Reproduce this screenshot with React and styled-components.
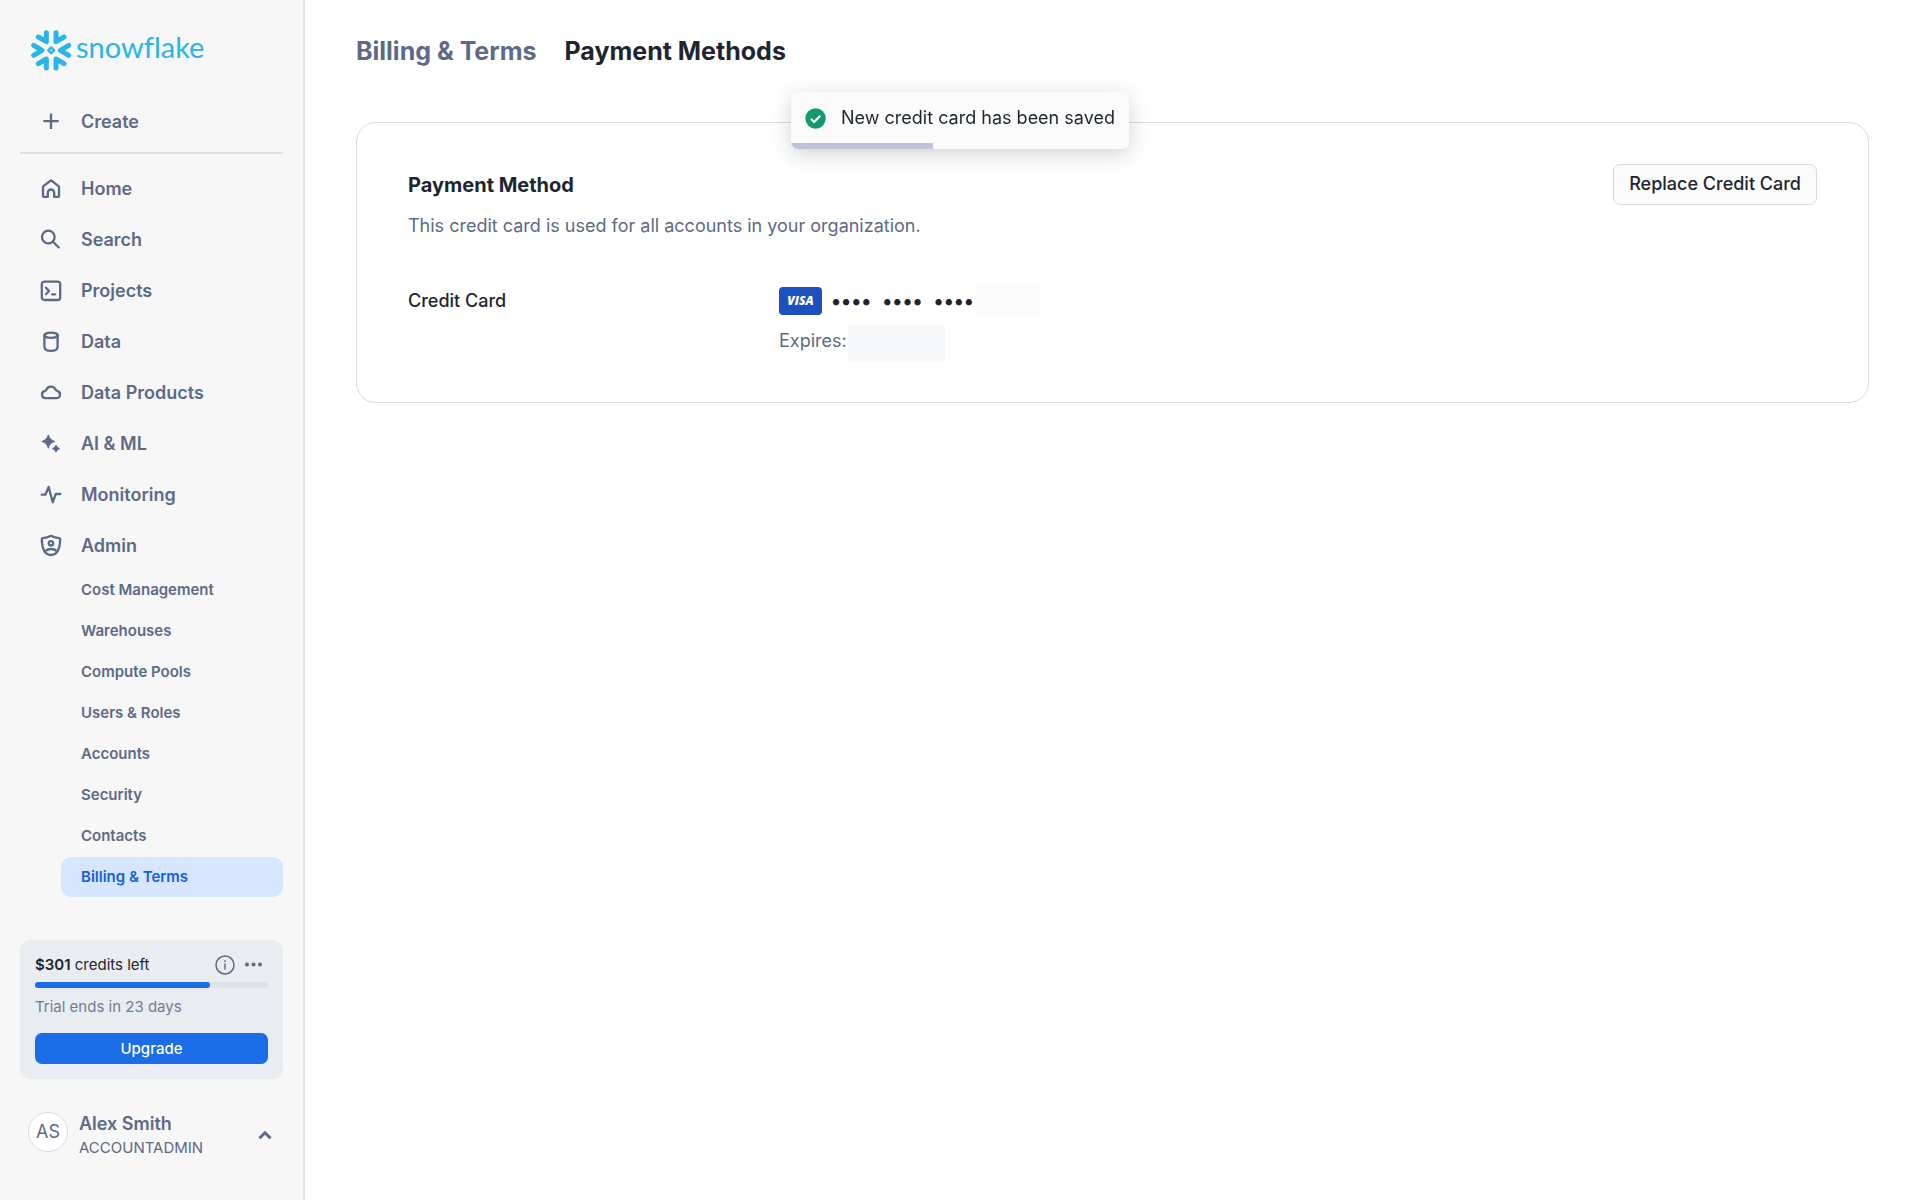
import React from "react";
import styled, { createGlobalStyle } from "styled-components";

const GlobalStyle = createGlobalStyle`
	*, *::before, *::after {
		box-sizing: border-box;
	}
	body {
		margin: 0;
		background: #ffffff;
		color: #1e252f;
		font-family: Inter, "Liberation Sans", sans-serif;
		font-size: 18px;
		line-height: 24px;
	}
	a {
		color: inherit;
		text-decoration: none;
	}
	button {
		font: inherit;
		cursor: pointer;
	}
	h1, h2, p, ul, dl, dd {
		margin: 0;
		padding: 0;
	}
`;

const Layout = styled.div`
	display: flex;
	min-height: 100vh;
`;

const Sidebar = styled.aside`
	display: flex;
	flex-direction: column;
	flex: none;
	width: 305px;
	padding: 30px 20px 40px;
	background: #f7f7f7;
	border-right: 2px solid #dfe1e6;
	color: #5d6a85;
`;

const Logo = styled.a`
	display: flex;
	align-items: center;
	gap: 4px;
	height: 41px;
	margin-left: 11px;
	color: #29b5e8;
`;

const Wordmark = styled.span`
	font-family: Lato, sans-serif;
	font-size: 29px;
	line-height: 36px;
	font-variant-ligatures: none;
	padding-bottom: 7px;
`;

const NavItem = styled.a`
	display: flex;
	align-items: center;
	gap: 18px;
	height: 51px;
	padding: 0 19px;
	font-weight: 600;
`;

const CreateButton = styled.button`
	display: flex;
	align-items: center;
	gap: 18px;
	height: 51px;
	margin-top: 25px;
	padding: 0 19px;
	border: 0;
	background: none;
	color: inherit;
	font-weight: 600;
`;

const Divider = styled.hr`
	width: 100%;
	height: 2px;
	margin: 5px 0 9px;
	border: 0;
	background: #dfe1e6;
`;

const NavList = styled.ul`
	list-style: none;
`;

const SubNavList = styled(NavList)`
	margin-top: -1px;
`;

const SubItem = styled.a`
	display: flex;
	align-items: center;
	height: 40px;
	margin: 0 0 1px 41px;
	padding: 0 20px;
	border-radius: 10px;
	font-size: 15px;
	font-weight: 600;
	background: ${({ $active }) => ($active ? "#d6e6ff" : "transparent")};
	color: ${({ $active }) => ($active ? "#1361d9" : "inherit")};
`;

const TrialCard = styled.section`
	margin-top: auto;
	padding: 14px 15px 15px;
	border-radius: 10px;
	background: #e9edf1;
	font-size: 15px;
`;

const TrialHeader = styled.div`
	display: flex;
	align-items: center;
	gap: 8px;
	height: 21px;
`;

const Credits = styled.p`
	flex: 1;
	color: #1e252f;
	strong {
		font-weight: 600;
	}
`;

const IconButton = styled.button`
	display: flex;
	padding: 0;
	border: 0;
	background: none;
	color: #5d6a85;
`;

const Track = styled.div`
	height: 6px;
	margin: 7px 0;
	border-radius: 3px;
	background: #dee1e5;
`;

const TrackFill = styled.div`
	height: 100%;
	border-radius: 3px;
	background: #1a6ce7;
`;

const TrialNote = styled.p`
	color: #717c94;
`;

const UpgradeButton = styled.button`
	width: 100%;
	height: 31px;
	margin-top: 14px;
	padding: 0;
	border: 0;
	border-radius: 7px;
	background: #1a6ce7;
	color: #ffffff;
	font-size: 15px;
	font-weight: 500;
`;

const UserMenu = styled.button`
	display: flex;
	align-items: center;
	gap: 11px;
	margin-top: 33px;
	padding: 0 10px 0 8px;
	border: 0;
	background: none;
	color: inherit;
	text-align: left;
`;

const Avatar = styled.span`
	display: flex;
	align-items: center;
	justify-content: center;
	align-self: flex-start;
	width: 40px;
	height: 40px;
	border: 1px solid #d5dae4;
	border-radius: 50%;
	background: #ffffff;
`;

const UserInfo = styled.span`
	display: flex;
	flex: 1;
	flex-direction: column;
`;

const UserName = styled.span`
	font-weight: 600;
`;

const UserRole = styled.span`
	font-size: 15px;
`;

const Main = styled.main`
	flex: 1;
	min-width: 0;
	padding: 34px 51px;
`;

const Tabs = styled.nav`
	display: flex;
	gap: 28px;
`;

const Tab = styled.a`
	font-size: 25px;
	line-height: 34px;
	font-weight: 700;
	color: ${({ $active }) => ($active ? "#1e252f" : "#5d6a85")};
`;

const Card = styled.section`
	margin-top: 54px;
	padding: 41px 51px 40px;
	border: 1px solid #d5dae4;
	border-radius: 20px;
`;

const CardHeader = styled.div`
	display: flex;
	align-items: center;
	justify-content: space-between;
`;

const CardTitle = styled.h2`
	font-size: 20px;
	font-weight: 700;
`;

const ReplaceButton = styled.button`
	height: 41px;
	padding: 0 15px 2px;
	border: 1px solid #d5dae4;
	border-radius: 7px;
	background: #fbfbfb;
	color: #1e252f;
	font-weight: 500;
`;

const CardDescription = styled.p`
	margin-top: 9px;
	color: #5d6a85;
`;

const Details = styled.dl`
	display: grid;
	grid-template-columns: 371px 1fr;
	margin-top: 46px;
`;

const DetailLabel = styled.dt`
	padding-top: 5px;
	font-weight: 500;
`;

const CardNumber = styled.div`
	display: flex;
	align-items: center;
	height: 33px;
`;

const VisaBadge = styled.span`
	display: flex;
	align-items: center;
	justify-content: center;
	width: 43px;
	height: 28px;
	margin-right: 9px;
	border-radius: 4px;
	background: #1f4fbf;
	color: #ffffff;
	font-family: "Open Sans", sans-serif;
	font-size: 12px;
	font-style: italic;
	font-weight: 800;
`;

const Dots = styled.span`
	display: flex;
	gap: 11px;
	margin-right: 2px;
	font-size: 20px;
	font-weight: 600;
`;

const Expiry = styled.div`
	display: flex;
	gap: 1px;
	margin-top: 8px;
	line-height: 32px;
	color: #5d6a85;
`;

const Masked = styled.span`
	width: ${({ $width }) => $width}px;
	height: ${({ $height }) => $height}px;
	background: ${({ $color }) => $color};
`;

const Toast = styled.div`
	position: fixed;
	top: 92px;
	left: 50%;
	transform: translateX(-50%);
	display: flex;
	align-items: center;
	gap: 15px;
	height: 57px;
	padding: 0 14px 5px;
	overflow: hidden;
	border-radius: 7px;
	background: #fbfbfb;
	box-shadow: 0 5px 20px rgba(25, 30, 36, 0.2);
	white-space: nowrap;
`;

const ToastProgress = styled.div`
	position: absolute;
	left: 0;
	bottom: 0;
	height: 6px;
	background: #bdc4d5;
`;

const Icon = ({ children, size = 24 }) => (
	<svg
		width={size}
		height={size}
		viewBox="0 0 24 24"
		fill="none"
		stroke="currentColor"
		strokeWidth="2.300"
		strokeLinecap="round"
		strokeLinejoin="round"
		aria-hidden="true"
	>
		{children}
	</svg>
);

const SnowflakeMark = () => (
	<svg width="41" height="41" viewBox="0 0 123 123" fill="none" stroke="currentColor" strokeWidth="15" strokeLinecap="round" strokeLinejoin="round" aria-hidden="true">
		<path d="M8 46 33 61 8 76M113 46 88 61 113 76" />
		<path d="M46 8V35L22 21M75 8V35L99 21M46 114V87L22 101M75 114V87L99 101" />
		<path strokeWidth="7.500" d="M60.500 52.500 69 61 60.500 69.500 52 61Z" />
	</svg>
);

const NAV = [
	{
		label: "Home",
		icon: <path d="M4 10.200a1.800 1.800 0 0 1 .7-1.400L12 3.300l7.300 5.500a1.800 1.800 0 0 1 .7 1.400V18.900a1 1 0 0 1-1 1h-3.800v-4.200a3.200 3.200 0 0 0-6.400 0v4.200H5a1 1 0 0 1-1-1z" />,
	},
	{
		label: "Search",
		icon: (
			<>
				<circle cx="9.300" cy="9" r="6.300" />
				<path d="m14 13.700 5.800 5.800" />
			</>
		),
	},
	{
		label: "Projects",
		icon: (
			<>
				<rect x="2.800" y="2.600" width="18.400" height="18.400" rx="2.500" />
				<path d="m7 8.800 3 3.200-3 3.200M13 15.300h3.200" />
			</>
		),
	},
	{
		label: "Data",
		icon: (
			<>
				<ellipse cx="12" cy="5.200" rx="6.600" ry="2.600" />
				<path d="M5.400 5.200v11.500c0 2.600 2.400 4.200 6.600 4.200s6.600-1.600 6.600-4.200V5.200" />
			</>
		),
	},
	{
		label: "Data Products",
		icon: <path d="M6.500 17.200h11.200a3.700 3.700 0 0 0 .4-7.300c-.8-.2-1.200-.7-1.500-1.400a5.100 5.100 0 0 0-9.300.2c-.3.600-.7 1-1.400 1.200a3.700 3.700 0 0 0 .6 7.300z" />,
	},
	{
		label: "AI & ML",
		icon: (
			<g fill="currentColor" strokeWidth="1.200">
				<path d="M9.300 3.200q1 5.200 6.200 6.300-5.200 1.100-6.200 6.300-1-5.200-6.200-6.300 5.200-1.100 6.200-6.300z" />
				<path d="M17 13.500q.6 2.600 3.200 3.200-2.600.6-3.200 3.200-.6-2.600-3.200-3.200 2.600-.6 3.200-3.200z" />
			</g>
		),
	},
	{
		label: "Monitoring",
		icon: <path d="M2.700 11.700H6.300L9.700 4l4 15.300 3-8.300h4.600" />,
	},
	{
		label: "Admin",
		icon: (
			<>
				<path d="M12 1.800c2.500 1.400 5.200 2.200 8.200 2.400.6 0 1 .5 1 1.100-.2 7.300-1.700 15.700-9.200 15.700S3 12.600 2.800 5.300c0-.6.4-1.100 1-1.100 3-.2 5.700-1 8.200-2.400z" />
				<circle cx="12" cy="9.300" r="2.200" />
				<path d="M6.500 16.800c3-2.400 8-2.400 11 0" />
			</>
		),
	},
];

const ADMIN_ITEMS = ["Cost Management", "Warehouses", "Compute Pools", "Users & Roles", "Accounts", "Security", "Contacts", "Billing & Terms"];

const SideNav = () => (
	<nav>
		<NavList>
			{NAV.map(({ label, icon }) => (
				<li key={label}>
					<NavItem href="#">
						<Icon>{icon}</Icon>
						{label}
					</NavItem>
				</li>
			))}
		</NavList>
		<SubNavList>
			{ADMIN_ITEMS.map((label) => (
				<li key={label}>
					<SubItem href="#" $active={label === "Billing & Terms"}>
						{label}
					</SubItem>
				</li>
			))}
		</SubNavList>
	</nav>
);

const Trial = ({ used }) => (
	<TrialCard>
		<TrialHeader>
			<Credits>
				<strong>$301</strong> credits left
			</Credits>
			<IconButton aria-label="Trial details">
				<svg width="20" height="20" viewBox="0 0 20 20" fill="none" stroke="currentColor" strokeWidth="1.500" aria-hidden="true">
					<circle cx="10" cy="10" r="9" />
					<path d="M10 8.500v6M10 5.300v1.600" />
				</svg>
			</IconButton>
			<IconButton aria-label="More options">
				<svg width="25" height="20" viewBox="0 0 25 20" fill="currentColor" aria-hidden="true">
					<circle cx="4" cy="9.500" r="2" />
					<circle cx="10.500" cy="9.500" r="2" />
					<circle cx="17" cy="9.500" r="2" />
				</svg>
			</IconButton>
		</TrialHeader>
		<Track>
			<TrackFill style={{ width: `${used}%` }} />
		</Track>
		<TrialNote>Trial ends in 23 days</TrialNote>
		<UpgradeButton>Upgrade</UpgradeButton>
	</TrialCard>
);

export default function App() {
	return (
		<>
			<GlobalStyle />
			<Layout>
				<Sidebar>
					<Logo href="#">
						<SnowflakeMark />
						<Wordmark>snowflake</Wordmark>
					</Logo>
					<CreateButton>
						<Icon>
							<path strokeLinecap="butt" d="M12 3.500v15.500M4.300 11.200h15.400" />
						</Icon>
						Create
					</CreateButton>
					<Divider />
					<SideNav />
					<Trial used={75} />
					<UserMenu>
						<Avatar>AS</Avatar>
						<UserInfo>
							<UserName>Alex Smith</UserName>
							<UserRole>ACCOUNTADMIN</UserRole>
						</UserInfo>
						<svg width="16" height="13" viewBox="0 0 16 13" fill="none" stroke="currentColor" strokeWidth="3" aria-hidden="true">
							<path d="m2.500 8.300 5.500-5.500 5.500 5.500" />
						</svg>
					</UserMenu>
				</Sidebar>
				<Main>
					<Tabs>
						<Tab href="#">Billing &amp; Terms</Tab>
						<Tab href="#" $active>
							Payment Methods
						</Tab>
					</Tabs>
					<Card>
						<CardHeader>
							<CardTitle>Payment Method</CardTitle>
							<ReplaceButton>Replace Credit Card</ReplaceButton>
						</CardHeader>
						<CardDescription>This credit card is used for all accounts in your organization.</CardDescription>
						<Details>
							<DetailLabel>Credit Card</DetailLabel>
							<dd>
								<CardNumber>
									<VisaBadge>VISA</VisaBadge>
									<Dots>
										<span>••••</span>
										<span>••••</span>
										<span>••••</span>
									</Dots>
									<Masked $width={64} $height={33} $color="#fcfcfd" />
								</CardNumber>
								<Expiry>
									Expires:
									<Masked $width={97} $height={37} $color="#f8f9fb" />
								</Expiry>
							</dd>
						</Details>
					</Card>
				</Main>
			</Layout>
			<Toast role="status">
				<svg width="21" height="21" viewBox="0 0 21 21" fill="none" aria-hidden="true">
					<circle cx="10.500" cy="10.500" r="10.200" fill="#139b6f" />
					<path d="m5.800 10.800 3.200 3.200 6.300-6.300" stroke="#ffffff" strokeWidth="2" />
				</svg>
				New credit card has been saved
				<ToastProgress style={{ width: "42%" }} />
			</Toast>
		</>
	);
}
